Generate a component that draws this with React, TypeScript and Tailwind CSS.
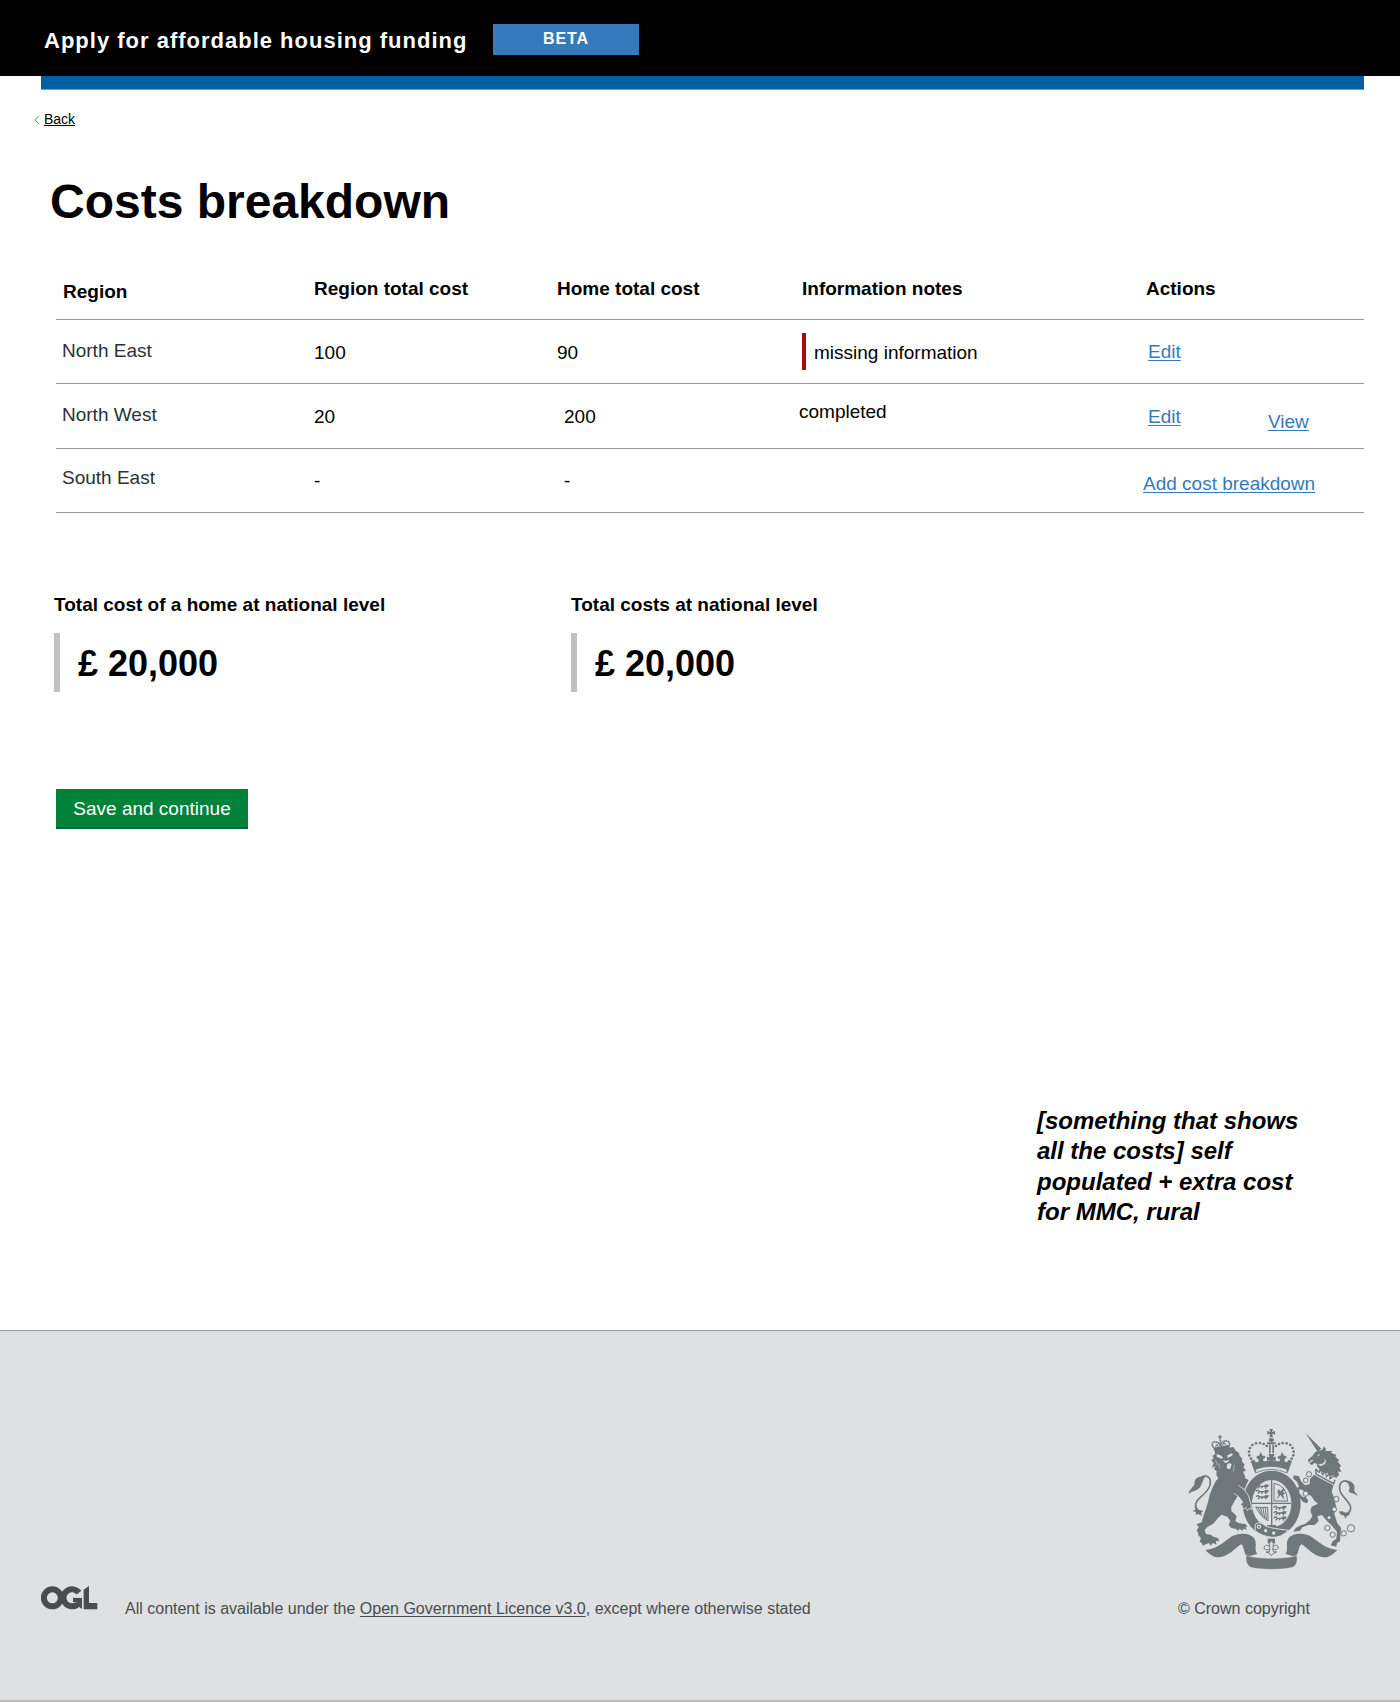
import type { ReactNode } from "react";

const link =
  "text-[#347abd] underline decoration-1 underline-offset-[2px] [text-decoration-skip-ink:none]";

function OglLogo() {
  return (
    <svg width="57" height="25" viewBox="0 0 171 75" className="block" aria-label="OGL">
      <g fill="none" stroke="#484d50" strokeWidth="18">
        <circle cx="34" cy="38.5" r="25.5" />
        <path d="M114 23 A26 25.5 0 1 0 110 58" />
      </g>
      <g fill="#484d50">
        <path d="M96 38 H123 V72 L112 64 L98 56 L110 51 H96Z" />
        <path d="M128 14 L144 3 V54 H169 V73 H128Z" />
      </g>
      <path d="M102 33 L119 21 L124 35 L122 38 H100Z" fill="#dee0e2" />
    </svg>
  );
}

function QuarterLions({ x, y }: { x: number; y: number }) {
  return (
    <g transform={`translate(${x} ${y})`} fill="none" stroke="#6f777b" strokeWidth="4">
      {[0, 16, 32].map((dy) => (
        <path
          key={dy}
          d={`M0 ${dy + 5} q1 -5 6 -4 l3 4 h15 l4 -4 l7 1 l-4 4 h-4 l2 6 M10 ${dy + 5} l-5 6 M18 ${dy + 5} l-2 6 M25 ${dy + 5} h11`}
        />
      ))}
    </g>
  );
}

function Ribbon() {
  return (
    <path d="M106 420 C140 418 160 396 186 379 C206 367 240 369 252 384 C264 402 250 418 262 432 C248 434 240 440 232 440 C219 428 224 408 213 403 C196 414 176 440 146 442 C130 443 118 432 106 420Z" />
  );
}

function CoatOfArms() {
  const dots = [
    [243, 146], [238, 136], [237, 125], [240, 114], [247, 105], [258, 100], [270, 99], [281, 102], [290, 108],
    [365, 146], [370, 136], [371, 125], [368, 114], [361, 105], [350, 100], [338, 99], [327, 102], [318, 108],
  ];
  return (
    <svg width="210" height="170" viewBox="0 0 630 510" className="block" fill="#6f777b" aria-label="Royal coat of arms">
      <Ribbon />
      <g transform="translate(608 0) scale(-1 1)">
        <Ribbon />
      </g>
      <path
        d="M229 436 C255 448 355 448 380 436 C384 452 380 466 368 472 C340 480 268 480 242 472 C229 465 226 450 229 436Z"
        stroke="#dee0e2"
        strokeWidth="1.5"
      />

      {/* Garter and shield */}
      <ellipse cx="305" cy="281" rx="91" ry="103" fill="#dee0e2" />
      <path fillRule="evenodd" d="M305 182 a87 99 0 1 1 -.1 0Z M305 210 a59 71 0 1 0 .1 0Z" />
      <path d="M305 210 V352 M246 280 H364" stroke="#6f777b" strokeWidth="4" />
      <QuarterLions x={259} y={224} />
      <QuarterLions x={312} y={288} />
      <path d="M312 220 Q350 226 353 273 H312Z" fill="none" stroke="#6f777b" strokeWidth="3" />
      <path d="M318 269 l8 -14 l-4 -9 l4 -8 l6 6 l10 -12 l1 8 l-5 6 l8 4 l-7 4 l5 14 l-8 -6 l-4 -7Z" />
      <path
        d="M257 291 Q270 294 293 292 L294 332 Q274 322 257 291Z M265 293 l8 21 M272 294 l7 28 M279 294 l5 31 M286 293 l3 35"
        fill="none"
        stroke="#6f777b"
        strokeWidth="3"
      />
      <path d="M291 345 h27 l3 11 h-32Z" />
      <path d="M256 343 Q266 334 276 340 Q285 350 302 353 Q328 358 356 361 Q332 384 306 382 Q276 379 255 362Z" stroke="#dee0e2" strokeWidth="3" />
      <g fill="#dee0e2">
        <circle cx="267" cy="350" r="6.5" />
        <circle cx="287" cy="362" r="5" />
        <circle cx="311" cy="369" r="5" />
      </g>
      <circle cx="267" cy="350" r="3" />

      {/* Lion */}
      <path d="M135 120 L190 111 L197 122 L207 128 L209 137 L217 146 L215 153 L224 164 L220 171 L228 182 L219 185 L226 200 L224 204 L236 210 L230 222 L222 240 L218 262 L208 250 L198 266 L184 290 L184 303 L200 318 L196 334 L208 340 L226 342 L233 350 L226 351 L231 359 L219 356 L218 363 L208 356 L206 362 L196 356 L184 354 L176 345 L181 332 L172 320 L154 314 L142 326 L130 341 L112 351 L104 360 L108 372 L122 374 L132 381 L144 384 L148 394 L138 393 L139 404 L129 399 L122 407 L117 399 L104 404 L99 408 L95 399 L89 395 L93 384 L85 376 L84 367 L80 361 L86 352 L80 343 L95 337 L101 316 L108 296 L114 276 L119 254 L128 232 L137 214 L145 205 L139 195 L140 184 L132 177 L137 168 L126 173 L131 158 L124 151 L131 144 L127 137 L134 134Z" />
      <path
        d="M206 226 L222 238 L236 258 L242 279 L246 299 L238 295 L232 302 L228 293 L218 297 L217 287 L211 284 L218 277 L208 262 L192 250"
        stroke="#dee0e2"
        strokeWidth="2.5"
      />
      <path d="M140 132 l14 5 l5 6 l-5 3 l-14 -6Z M172 136 l14 -6 l3 4 l-9 7 l-8 2Z M159 149 l7 4 l11 -3 l-2 5 l-7 4 l-6 -3Z M172 161 q9 -4 13 2 l-4 13 q-7 3 -11 -2Z" fill="#dee0e2" />
      <path d="M136 150 l6 15 M146 160 l4 16 M193 165 l-3 20" stroke="#dee0e2" strokeWidth="1.5" fill="none" />
      <path
        d="M83 302 C72 290 76 274 91 262 C107 249 124 232 121 213 C119 197 104 194 94 203"
        fill="none"
        stroke="#6f777b"
        strokeWidth="5"
      />
      <path d="M106 201 C88 196 70 206 74 222 C67 234 57 241 55 253 C67 241 79 244 88 234 C98 224 96 210 106 201Z M76 285 L86 299 L100 303 L93 309 L96 318 L84 312 L77 315 L78 306 L67 303 L76 299Z" />
      <path d="M130 113 L178 104 L179 116 L133 124Z" />
      <path
        d="M131 113 C121 101 130 91 141 97 C149 99 151 109 153 109 C153 97 162 89 172 94 C181 96 180 103 176 108 M151 88 V108"
        fill="none"
        stroke="#6f777b"
        strokeWidth="5"
        strokeDasharray="5 1.5"
      />
      <path d="M136 112 l5 -9 l4 8 M158 107 l4 -9 l5 7" stroke="#6f777b" strokeWidth="3" fill="none" />
      <path d="M145 81 h10 M150 76 v11" stroke="#6f777b" strokeWidth="4" />

      {/* Crown */}
      <path d="M298 57 h11 l-3 9 l9 -3 v11 l-9 -3 l3 11 h-11 l3 -11 l-9 3 v-11 l9 3Z" />
      <ellipse cx="304" cy="90" rx="8" ry="6" />
      <path d="M291 97 H317 V103 H291Z M297 104 h5 v26 h-5Z M307 104 h5 v26 h-5Z" />
      <path d="M295 132 h19 l-5 10 l8 -2 v13 l-8 -2 l4 10 h-18 l4 -10 l-8 2 v-13 l8 2Z" />
      {dots.map(([x, y]) => (
        <circle key={`${x}-${y}`} cx={x} cy={y} r="4" />
      ))}
      <path d="M272 126 l6 12 q5 -3 8 3 q-1 6 -7 5 l2 11 h-16 l1 -10 q-7 1 -7 -5 q2 -6 8 -4Z M336 126 l6 12 q5 -3 8 3 q-1 6 -7 5 l2 11 h-16 l1 -10 q-7 1 -7 -5 q2 -6 8 -4Z" />
      <path d="M242 153 l10 -4 l5 8 Q304 149 351 157 l5 -8 l10 4 L354 186 Q304 163 254 186Z" />
      <path d="M258 177 Q304 161 350 177 L352 189 Q304 167 256 189Z" fill="#dee0e2" stroke="#6f777b" strokeWidth="2.5" />

      {/* Fleur-de-lis pendant */}
      <path d="M293 386 h22 v14 h-22Z" />
      <path
        d="M304 391 q-10 10 -4 21 q-11 -12 -17 -2 q-3 10 9 9 q5 0 8 -4 l-2 10 l-10 1 l11 4 l5 7 l6 -7 l10 -4 l-10 -1 l-2 -10 q5 6 11 4 q9 -3 5 -10 q-7 -8 -15 3 q6 -11 -5 -21Z"
        fill="#dee0e2"
        stroke="#6f777b"
        strokeWidth="3"
      />

      {/* Unicorn */}
      <path d="M406 68 L454 116 L443 125Z" />
      <path d="M412 78 L446 114" stroke="#dee0e2" strokeWidth="0.6" strokeDasharray="2 4" />
      <path d="M442 124 L457 119 L462 109 L468 117 L467 123 L487 123 L483 128 L499 135 L496 140 L508 151 L503 155 L514 168 L508 172 L514 187 L504 184 L507 195 L498 205 L490 196 L480 199 L472 189 L457 186 L443 172 L440 161 L433 159 L426 165 L418 161 L425 153 L415 157 L414 149 L427 138 L436 126Z" />
      <path d="M442 136 l7 -4 l-2 7Z M444 162 q15 2 19 -6 q3 -6 1 -11 q7 10 0 18 l-13 6Z M418 152 l13 -3 l-5 6Z" fill="#dee0e2" />
      <path
        d="M437 176 l1 16 l53 29 l4 -12 M438 178 l9 9 l4 -10 l7 17 l8 -11 l3 17 l11 -10 l0 16 l12 -8"
        fill="none"
        stroke="#6f777b"
        strokeWidth="4"
      />
      <path d="M432 194 L442 200 L490 226 L485 245 L493 265 L498 288 L493 313 L502 340 L513 353 L510 394 L501 399 L499 410 L482 406 L488 394 L499 386 L501 365 L483 344 L470 332 L456 315 L442 319 L446 333 L434 345 L415 345 L398 351 L390 362 L370 365 L377 354 L389 347 L406 341 L420 330 L427 319 L421 302 L425 290 L444 281 L434 273 L423 257 L409 251 L402 242 L388 237 L388 249 L398 261 L407 260 L415 273 L410 280 L399 275 L389 263 L380 251 L379 236 L387 229 L381 215 L369 205 L372 196 L387 199 L393 214 L405 226 L419 222 L420 207Z" />
      <path
        d="M508 304 C520 323 547 307 541 288 C538 276 516 260 510 242 C504 220 520 204 538 218"
        fill="none"
        stroke="#6f777b"
        strokeWidth="5"
      />
      <path d="M527 213 C544 209 557 225 553 237 C551 247 560 248 564 258 C552 249 541 251 535 243 C543 236 537 221 527 213Z M514 302 L528 309 L541 306 L537 316 L530 318 L528 327 L521 316 L512 314Z" />
      <g fill="#dee0e2" stroke="#6f777b" strokeWidth="3">
        <circle cx="417" cy="193" r="8" />
        <circle cx="407" cy="211" r="7" />
        <circle cx="407" cy="251" r="8" />
        <circle cx="499" cy="267" r="8" />
        <circle cx="493" cy="298" r="7" />
        <circle cx="477" cy="323" r="6" />
        <circle cx="472" cy="354" r="8" />
        <circle cx="488" cy="374" r="8" />
        <circle cx="521" cy="370" r="8" />
        <circle cx="543" cy="355" r="11" />
      </g>
    </svg>
  );
}

function Row({ className, children }: { className: string; children: ReactNode }) {
  return (
    <div
      className={`grid grid-cols-[258px_243px_242px_344px_1fr] items-start border-b border-[#979899] text-[19px] leading-[21px] ${className}`}
    >
      {children}
    </div>
  );
}

function Total({ label }: { label: string }) {
  return (
    <div>
      <h2 className="text-[19px] leading-[21px] font-bold">{label}</h2>
      <p className="mt-[18px] h-[59px] border-l-6 border-[#bfc1c3] pt-[10px] pl-[18px] text-[36px] leading-[41px] font-bold">
        £ 20,000
      </p>
    </div>
  );
}

export default function App() {
  return (
    <div className="flex h-[1702px] w-[1400px] flex-col overflow-hidden bg-white font-['Liberation_Sans',Arial,sans-serif] text-black">
      <header className="flex h-[76px] shrink-0 items-start bg-black text-white">
        <div className="w-[493px] pt-7 pl-11 text-[22px] leading-[25px] font-bold tracking-[1px]">
          Apply for affordable housing funding
        </div>
        <div className="mt-6 h-[31px] w-[146px] bg-[#347abd] pt-1.5 text-center text-[16px] leading-[17px] font-bold tracking-[0.9px]">
          BETA
        </div>
      </header>
      <div className="mr-9 ml-[41px] h-[14px] shrink-0 border-b border-[#6a9fca] bg-[#005ea5]" />

      <nav className="mt-[21px] flex h-4 shrink-0 items-start pl-[34px] text-[14px] leading-4">
        <svg width="6" height="10" viewBox="0 0 6 10" className="mt-1 mr-1" fill="none" stroke="#6f777b">
          <path d="M4.8 0.8 L1 4.8 L4.8 8.8" />
        </svg>
        <a className="underline decoration-1 underline-offset-[1px]">Back</a>
      </nav>

      <main className="flex shrink-0 flex-col">
        <h1 className="mt-12 pl-[50px] text-[48px] leading-[53px] font-bold">Costs breakdown</h1>

        <section className="mt-8 mr-9 ml-14">
          <Row className="h-[60px] font-bold">
            <div className="pt-[21px] pl-[7px]">Region</div>
            <div className="pt-[18px]">Region total cost</div>
            <div className="pt-[18px]">Home total cost</div>
            <div className="pt-[18px] pl-[3px]">Information notes</div>
            <div className="pt-[18px] pl-[3px]">Actions</div>
          </Row>
          <Row className="h-[64px]">
            <div className="pt-5 pl-1.5 text-[#2e3133]">North East</div>
            <div className="pt-[22px]">100</div>
            <div className="pt-[22px]">90</div>
            <div className="mt-[13px] ml-[3px] h-[37px] border-l-4 border-[#a90b10] pt-[9px] pl-2">missing information</div>
            <div className="pt-[21px] pl-[5px]">
              <a className={link}>Edit</a>
            </div>
          </Row>
          <Row className="h-[65px]">
            <div className="pt-5 pl-1.5 text-[#2e3133]">North West</div>
            <div className="pt-[22px]">20</div>
            <div className="pt-[22px] pl-[7px]">200</div>
            <div className="pt-[17px]">completed</div>
            <div className="flex pl-[5px]">
              <a className={`mt-[22px] w-[120px] ${link}`}>Edit</a>
              <a className={`mt-[27px] ${link}`}>View</a>
            </div>
          </Row>
          <Row className="h-[64px]">
            <div className="pt-[18px] pl-1.5 text-[#2e3133]">South East</div>
            <div className="pt-[21px]">-</div>
            <div className="pt-[21px] pl-[7px]">-</div>
            <div />
            <div className="pt-6">
              <a className={link}>Add cost breakdown</a>
            </div>
          </Row>
        </section>

        <section className="mt-[81px] ml-[54px] grid grid-cols-[517px_1fr]">
          <Total label="Total cost of a home at national level" />
          <Total label="Total costs at national level" />
        </section>

        <button className="mt-[97px] ml-14 h-10 w-[192px] border-b-2 border-[#00692f] bg-[#00823b] pt-px text-[19px] leading-[21px] text-white">
          Save and continue
        </button>

        <p className="mt-[277px] ml-[1037px] h-[224px] w-[280px] text-[24px] leading-[30.4px] font-bold italic">
          [something that shows
          <br />
          all the costs] self
          <br />
          populated + extra cost
          <br />
          for MMC, rural
        </p>
      </main>

      <footer className="flex h-[372px] shrink-0 flex-col border-t border-b-2 border-t-[#989a9b] border-b-[#bdbdbe] bg-[#dee0e2] text-[16px] leading-[17px] text-[#484d50]">
        <div className="mt-[79px] ml-[1170px] h-[170px]">
          <CoatOfArms />
        </div>
        <div className="mt-[5px] flex items-start pl-[41px]">
          <OglLogo />
          <p className="mt-[15px] ml-[27px] w-[1053px]">
            All content is available under the{" "}
            <a className="underline decoration-1 underline-offset-[2px] [text-decoration-skip-ink:none]">
              Open Government Licence v3.0
            </a>
            , except where otherwise stated
          </p>
          <p className="mt-[15px]">© Crown copyright</p>
        </div>
      </footer>
    </div>
  );
}
